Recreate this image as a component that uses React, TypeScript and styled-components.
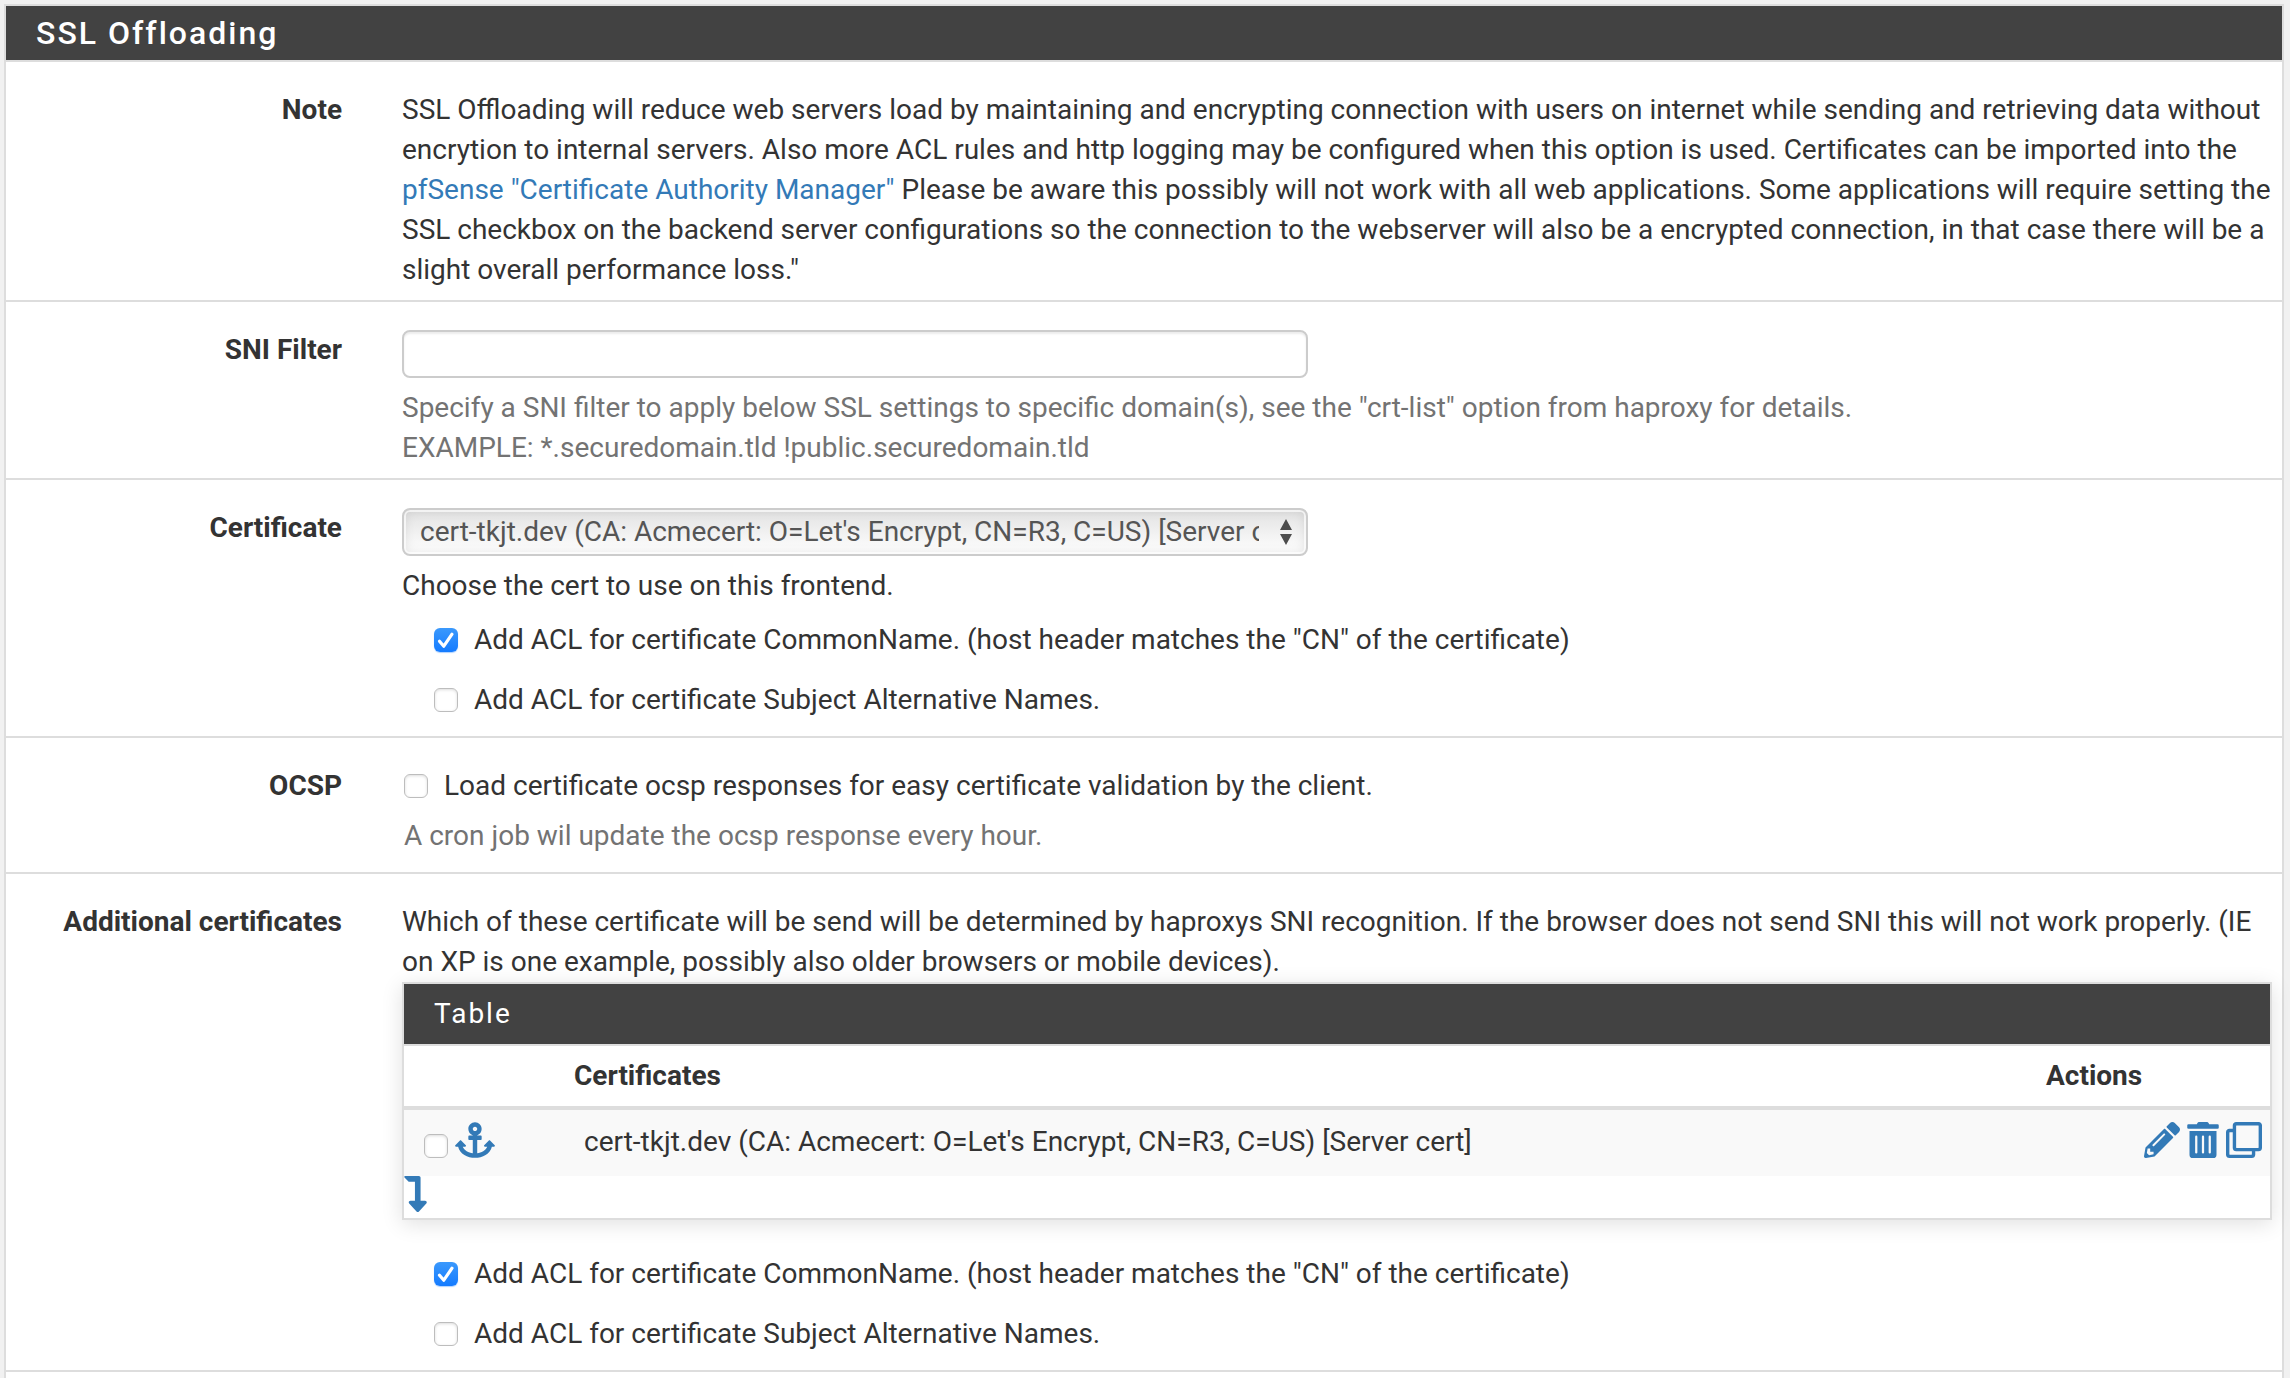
import React from "react";
import styled, { createGlobalStyle } from "styled-components";
import {
  FaAnchor,
  FaLevelDownAlt,
  FaPencilAlt,
  FaRegClone,
  FaTrashAlt,
} from "react-icons/fa";

const colors = {
  page: "#f1f1f1",
  line: "#dddddd",
  header: "#424242",
  text: "#333333",
  muted: "#737373",
  link: "#337ab7",
};

const GlobalStyle = createGlobalStyle`
  * {
    box-sizing: border-box;
  }
  body {
    margin: 0;
    background: ${colors.page};
    color: ${colors.text};
    font-family: Roboto, "Liberation Sans", sans-serif;
    font-size: 28px;
    line-height: 40px;
  }
`;

const Page = styled.main`
  padding: 4px 6px 0 4px;
  min-height: 100vh;
  display: flex;
  flex-direction: column;
`;

const Panel = styled.section`
  flex: 1;
  background: #ffffff;
  border: 2px solid ${colors.line};
  border-bottom: 0;
`;

const PanelTitle = styled.h2`
  margin: 0;
  padding: 7px 30px;
  background: ${colors.header};
  border-bottom: 2px solid ${colors.line};
  color: #ffffff;
  font-size: 32px;
  font-weight: 500;
  line-height: 40px;
  letter-spacing: 2px;
`;

const Group = styled.div<{ $bottom?: number }>`
  display: grid;
  grid-template-columns: 336px minmax(0, 1fr);
  column-gap: 60px;
  padding: 28px 10px ${(p) => p.$bottom ?? 10}px 0;
  border-bottom: 2px solid ${colors.line};
`;

const GroupName = styled.div`
  font-weight: 700;
  text-align: right;
`;

const Text = styled.p`
  margin: 0;
`;

const Help = styled.p`
  margin: 10px 0 0;
  color: ${colors.muted};
`;

const Link = styled.a`
  color: ${colors.link};
  text-decoration: none;
`;

const TextInput = styled.input`
  display: block;
  width: 906px;
  max-width: 100%;
  height: 48px;
  padding: 0 16px;
  border: 2px solid #cccccc;
  border-radius: 8px;
  background: #ffffff;
  box-shadow: inset 0 2px 2px rgba(0, 0, 0, 0.08);
  color: #555555;
  font: inherit;
`;

const SelectWrap = styled.div`
  position: relative;
  width: 906px;
  max-width: 100%;
  margin-bottom: 10px;
`;

const Select = styled.select`
  display: block;
  width: 100%;
  height: 48px;
  padding: 0 47px 0 16px;
  border: 2px solid #cccccc;
  border-radius: 8px;
  appearance: none;
  background: linear-gradient(#e2e2e2, #ffffff);
  box-shadow: inset 0 0 0 2px rgba(255, 255, 255, 0.7),
    inset 0 0 12px rgba(0, 0, 0, 0.12);
  color: #555555;
  font: inherit;
`;

const Carets = styled.svg`
  position: absolute;
  right: 16px;
  top: 11px;
  width: 12px;
  height: 26px;
  pointer-events: none;
`;

const Checks = styled.div<{ $top: number }>`
  display: grid;
  row-gap: 20px;
  padding: ${(p) => p.$top}px 0 0 32px;
`;

const CheckLabel = styled.label`
  display: flex;
  align-items: center;
  gap: 16px;
`;

const OcspCheck = styled.div`
  padding-left: 2px;
`;

const Checkbox = styled.input`
  flex: none;
  width: 24px;
  height: 24px;
  margin: 0;
  appearance: none;
  border: 1px solid #bdbdbd;
  border-radius: 6px;
  background: #ffffff;
  box-shadow: inset 0 1px 3px rgba(0, 0, 0, 0.14);

  &:checked {
    border-color: transparent;
    background: url("data:image/svg+xml,%3Csvg xmlns='http://www.w3.org/2000/svg' viewBox='0 0 24 24'%3E%3Cpath d='M5.5 13.2l4.3 5L18 6.2' fill='none' stroke='white' stroke-width='3.2' stroke-linecap='round' stroke-linejoin='round'/%3E%3C/svg%3E")
        center / 24px border-box,
      linear-gradient(#3b99fc, #147bff) border-box;
    box-shadow: 0 1px 1px rgba(20, 123, 255, 0.35);
  }
`;

const TablePanel = styled.div`
  border: 2px solid ${colors.line};
  background: #ffffff;
  box-shadow: 0 4px 20px rgba(0, 0, 0, 0.12);
`;

const TableTitle = styled.h3`
  margin: 0;
  padding: 10px 30px;
  background: ${colors.header};
  border-bottom: 2px solid ${colors.line};
  color: #ffffff;
  font-size: 28px;
  font-weight: 400;
  line-height: 40px;
  letter-spacing: 2px;
`;

const Table = styled.table`
  width: 100%;
  table-layout: fixed;
  border-collapse: separate;
  border-spacing: 0;
`;

const HeadCell = styled.th<{ $width?: number }>`
  width: ${(p) => (p.$width ? `${p.$width}px` : "auto")};
  padding: 10px;
  border-bottom: 4px solid ${colors.line};
  font-weight: 700;
  text-align: left;
`;

const Cell = styled.td`
  height: 66px;
  padding: 12px 8px 14px 20px;
  background: #f9f9f9;
  vertical-align: top;
`;

const CellTools = styled.div<{ $end?: boolean }>`
  display: flex;
  align-items: flex-end;
  justify-content: ${(p) => (p.$end ? "flex-end" : "flex-start")};
  gap: 7px;
  height: 36px;
`;

const IconButton = styled.button<{ $width: number }>`
  display: flex;
  padding: 0;
  border: 0;
  background: none;
  color: ${colors.link};
  cursor: pointer;

  svg {
    width: ${(p) => p.$width}px;
    height: 36px;
  }
`;

const TableFoot = styled.div`
  display: flex;
  padding-bottom: 6px;
`;

const CERT = "cert-tkjt.dev (CA: Acmecert: O=Let's Encrypt, CN=R3, C=US) [Server cert]";

function Check({ label, checked }: { label: string; checked?: boolean }) {
  return (
    <CheckLabel>
      <Checkbox type="checkbox" defaultChecked={checked} />
      {label}
    </CheckLabel>
  );
}

function AclChecks({ top }: { top: number }) {
  return (
    <Checks $top={top}>
      <Check
        checked
        label={'Add ACL for certificate CommonName. (host header matches the "CN" of the certificate)'}
      />
      <Check label="Add ACL for certificate Subject Alternative Names." />
    </Checks>
  );
}

export default function App() {
  return (
    <>
      <GlobalStyle />
      <Page>
        <Panel>
          <PanelTitle>SSL Offloading</PanelTitle>

          <Group>
            <GroupName>Note</GroupName>
            <Text>
              SSL Offloading will reduce web servers load by maintaining and encrypting connection
              with users on internet while sending and retrieving data without encrytion to internal
              servers. Also more ACL rules and http logging may be configured when this option is
              used. Certificates can be imported into the{" "}
              <Link href="#ca">pfSense "Certificate Authority Manager"</Link> Please be aware this
              possibly will not work with all web applications. Some applications will require
              setting the SSL checkbox on the backend server configurations so the connection to the
              webserver will also be a encrypted connection, in that case there will be a slight
              overall performance loss."
            </Text>
          </Group>

          <Group>
            <GroupName as="label" htmlFor="sni">
              SNI Filter
            </GroupName>
            <div>
              <TextInput id="sni" type="text" />
              <Help>
                Specify a SNI filter to apply below SSL settings to specific domain(s), see the
                "crt-list" option from haproxy for details.
                <br />
                EXAMPLE: *.securedomain.tld !public.securedomain.tld
              </Help>
            </div>
          </Group>

          <Group $bottom={16}>
            <GroupName as="label" htmlFor="cert">
              Certificate
            </GroupName>
            <div>
              <SelectWrap>
                <Select id="cert">
                  <option>{CERT}</option>
                </Select>
                <Carets viewBox="0 0 12 26" aria-hidden="true">
                  <path d="M6 0l6 11H0zM6 26l6-11H0z" fill="#4d4d4d" />
                </Carets>
              </SelectWrap>
              <Text>Choose the cert to use on this frontend.</Text>
              <AclChecks top={14} />
            </div>
          </Group>

          <Group $bottom={16}>
            <GroupName>OCSP</GroupName>
            <OcspCheck>
              <Check label="Load certificate ocsp responses for easy certificate validation by the client." />
              <Help>A cron job wil update the ocsp response every hour.</Help>
            </OcspCheck>
          </Group>

          <Group $bottom={16}>
            <GroupName>Additional certificates</GroupName>
            <div>
              <Text>
                Which of these certificate will be send will be determined by haproxys SNI
                recognition. If the browser does not send SNI this will not work properly. (IE on XP
                is one example, possibly also older browsers or mobile devices).
              </Text>
              <TablePanel>
                <TableTitle>Table</TableTitle>
                <Table>
                  <thead>
                    <tr>
                      <HeadCell $width={160} />
                      <HeadCell>Certificates</HeadCell>
                      <HeadCell $width={234}>Actions</HeadCell>
                    </tr>
                  </thead>
                  <tbody>
                    <tr>
                      <Cell>
                        <CellTools>
                          <Checkbox type="checkbox" aria-label="Select certificate" />
                          <IconButton $width={40} type="button" aria-label="Move selected here">
                            <FaAnchor />
                          </IconButton>
                        </CellTools>
                      </Cell>
                      <Cell>{CERT}</Cell>
                      <Cell>
                        <CellTools $end>
                          <IconButton $width={36} type="button" aria-label="Edit">
                            <FaPencilAlt />
                          </IconButton>
                          <IconButton $width={32} type="button" aria-label="Delete">
                            <FaTrashAlt />
                          </IconButton>
                          <IconButton $width={36} type="button" aria-label="Duplicate">
                            <FaRegClone />
                          </IconButton>
                        </CellTools>
                      </Cell>
                    </tr>
                  </tbody>
                </Table>
                <TableFoot>
                  <IconButton $width={23} type="button" aria-label="Add entry">
                    <FaLevelDownAlt />
                  </IconButton>
                </TableFoot>
              </TablePanel>
              <AclChecks top={34} />
            </div>
          </Group>
        </Panel>
      </Page>
    </>
  );
}
